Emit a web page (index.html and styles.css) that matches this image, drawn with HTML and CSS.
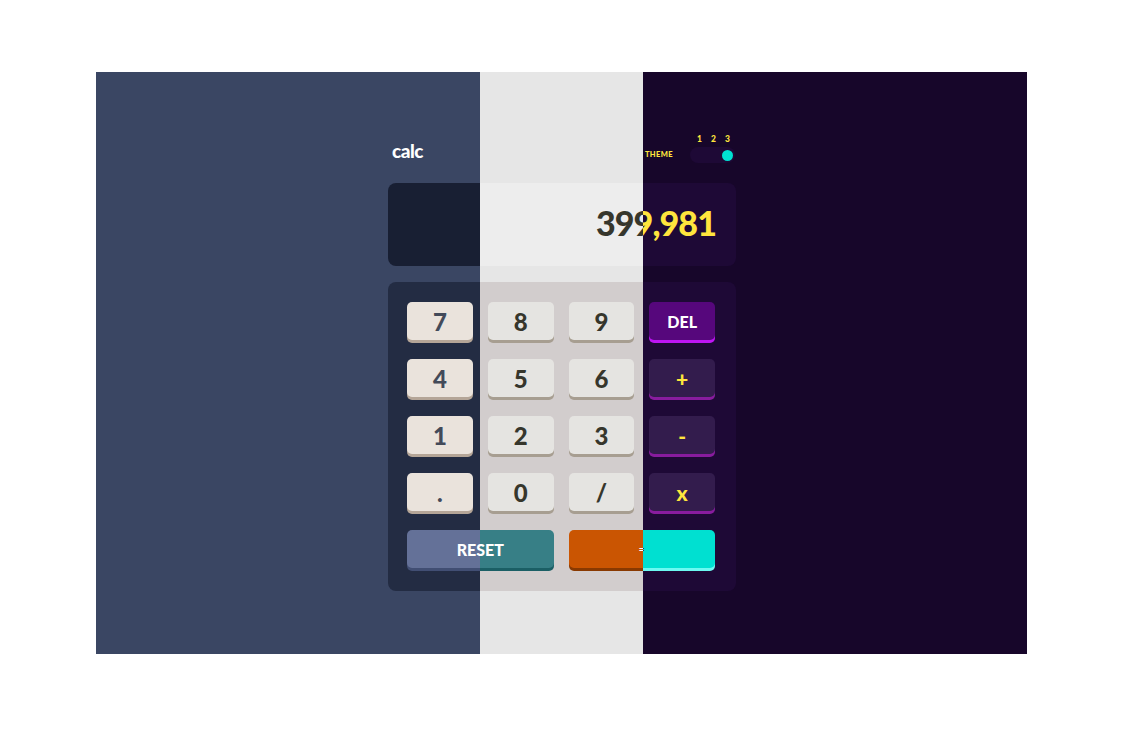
FILE: index.html
```html
<!DOCTYPE html>
<html lang="en">
<head>
<meta charset="utf-8">
<title>calc</title>
<link rel="stylesheet" href="styles.css">
</head>
<body>
<main class="stage">
  <section class="theme t1">
    <div class="calc">
      <header class="head">
        <h1 class="logo">calc</h1>
        <div class="switcher">
          <span class="label">THEME</span>
          <div class="toggle-wrap">
            <div class="nums"><span>1</span><span>2</span><span>3</span></div>
            <div class="toggle"><span class="knob"></span></div>
          </div>
        </div>
      </header>
      <div class="display">399,981</div>
      <div class="keypad">
        <button class="key">7</button><button class="key">8</button><button class="key">9</button><button class="key alt">DEL</button>
        <button class="key">4</button><button class="key">5</button><button class="key">6</button><button class="key op">+</button>
        <button class="key">1</button><button class="key">2</button><button class="key">3</button><button class="key op">-</button>
        <button class="key dot">.</button><button class="key">0</button><button class="key">/</button><button class="key op">x</button>
        <button class="key alt wide">RESET</button><button class="key eq wide">=</button>
      </div>
    </div>
  </section>
  <section class="theme t2">
    <div class="calc">
      <header class="head">
        <h1 class="logo">calc</h1>
        <div class="switcher">
          <span class="label">THEME</span>
          <div class="toggle-wrap">
            <div class="nums"><span>1</span><span>2</span><span>3</span></div>
            <div class="toggle"><span class="knob"></span></div>
          </div>
        </div>
      </header>
      <div class="display">399,981</div>
      <div class="keypad">
        <button class="key">7</button><button class="key">8</button><button class="key">9</button><button class="key alt">DEL</button>
        <button class="key">4</button><button class="key">5</button><button class="key">6</button><button class="key op">+</button>
        <button class="key">1</button><button class="key">2</button><button class="key">3</button><button class="key op">-</button>
        <button class="key dot">.</button><button class="key">0</button><button class="key">/</button><button class="key op">x</button>
        <button class="key alt wide">RESET</button><button class="key eq wide">=</button>
      </div>
    </div>
  </section>
  <section class="theme t3">
    <div class="calc">
      <header class="head">
        <h1 class="logo">calc</h1>
        <div class="switcher">
          <span class="label">THEME</span>
          <div class="toggle-wrap">
            <div class="nums"><span>1</span><span>2</span><span>3</span></div>
            <div class="toggle"><span class="knob"></span></div>
          </div>
        </div>
      </header>
      <div class="display">399,981</div>
      <div class="keypad">
        <button class="key">7</button><button class="key">8</button><button class="key">9</button><button class="key alt">DEL</button>
        <button class="key">4</button><button class="key">5</button><button class="key">6</button><button class="key op">+</button>
        <button class="key">1</button><button class="key">2</button><button class="key">3</button><button class="key op">-</button>
        <button class="key dot">.</button><button class="key">0</button><button class="key">/</button><button class="key op">x</button>
        <button class="key alt wide">RESET</button><button class="key eq wide">=</button>
      </div>
    </div>
  </section>
</main>
</body>
</html>
```
FILE: styles.css
```css
* { box-sizing: border-box; }
html, body { margin: 0; padding: 0; background: #ffffff; }
body {
  padding: 72px 0 0 96px;
  font-family: "Lato", "Liberation Sans", sans-serif;
  font-weight: 900;
}
.stage {
  width: 931px;
  height: 582px;
  display: grid;
}
.theme {
  grid-area: 1 / 1;
  display: flex;
  align-items: flex-start;
  padding: 62px 0 0 292px;
}
.t1 { clip-path: inset(0 547px 0 0); }
.t2 { clip-path: inset(0 384px 0 384px); }
.t3 { clip-path: inset(0 0 0 547px); }

.calc { width: 348px; display: flex; flex-direction: column; }

.head {
  height: 29px;
  display: flex;
  justify-content: space-between;
  align-items: flex-end;
  padding: 0 1px 0 4px;
}
.logo {
  margin: 0 0 2px;
  font-size: 19px;
  line-height: 20px;
  font-weight: 900;
  letter-spacing: -0.5px;
}
.switcher { display: flex; align-items: flex-end; gap: 17px; }
.label {
  font-size: 7.5px;
  font-weight: 900;
  letter-spacing: 0.4px;
  line-height: 10px;
  margin-bottom: 3px;
}
.toggle-wrap { display: flex; flex-direction: column; gap: 3px; width: 45px; }
.nums {
  display: flex;
  justify-content: space-between;
  padding: 0 5px 0 7px;
  font-size: 8.5px;
  line-height: 10px;
}
.toggle {
  height: 16px;
  border-radius: 8px;
  display: flex;
  align-items: center;
  padding: 0 2px;
}
.knob { width: 11px; height: 11px; border-radius: 50%; }

.display {
  margin-top: 20px;
  height: 83px;
  border-radius: 8px;
  display: flex;
  align-items: center;
  justify-content: flex-end;
  padding: 0 20px 4px;
  font-size: 34px;
  letter-spacing: -0.9px;
}

.keypad {
  margin-top: 16px;
  border-radius: 8px;
  padding: 20px 21px 23px 19px;
  display: grid;
  grid-template-columns: repeat(4, 1fr);
  column-gap: 15px;
  row-gap: 19px;
}
.key {
  height: 38px;
  border: 0;
  border-radius: 5px;
  font-family: inherit;
  font-weight: 900;
  font-size: 24px;
  display: flex;
  align-items: center;
  justify-content: center;
  padding: 0;
}
.key.alt { font-size: 16px; color: #ffffff; }
.key.wide { grid-column: span 2; }
.key.eq { font-size: 10px; }
.key.op { font-size: 21px; }

/* theme 1 */
.t1 { background: #3a4663; }
.t1 .logo, .t1 .label, .t1 .nums { color: #ffffff; }
.t1 .toggle { background: #232c43; }
.t1 .knob { background: #d03f2f; }
.t1 .display { background: #181f33; color: #ffffff; }
.t1 .keypad { background: #232c43; }
.t1 .key { background: #eae3dc; color: #434a59; box-shadow: 0 3px 0 #b4a597; }
.t1 .key.alt { background: #647198; color: #ffffff; box-shadow: 0 3px 0 #414e73; }
.t1 .key.eq { background: #d03f2f; color: #ffffff; box-shadow: 0 3px 0 #93261a; }

/* theme 2 */
.t2 { background: #e6e6e6; }
.t2 .logo, .t2 .label, .t2 .nums { color: #36362c; }
.t2 .toggle { background: #d2cdcd; justify-content: center; }
.t2 .knob { background: #ca5502; }
.t2 .display { background: #ededed; color: #36362c; }
.t2 .keypad { background: #d2cdcd; }
.t2 .key { background: #e5e4e1; color: #36362c; box-shadow: 0 3px 0 #a79e91; }
.t2 .key.alt { background: #377f86; color: #ffffff; box-shadow: 0 3px 0 #1b5f65; }
.t2 .key.eq { background: #ca5502; color: #ffffff; box-shadow: 0 3px 0 #893901; }

/* theme 3 */
.t3 { background: #17062a; }
.t3 .logo, .t3 .label, .t3 .nums { color: #ffe53d; }
.t3 .toggle { background: #1e0936; justify-content: flex-end; }
.t3 .knob { background: #00e0d1; }
.t3 .display { background: #1e0936; color: #ffe53d; }
.t3 .keypad { background: #1e0936; }
.t3 .key { background: #331c4d; color: #ffe53d; box-shadow: 0 3px 0 #881c9e; }
.t3 .key.alt { background: #56077c; color: #ffffff; box-shadow: 0 3px 0 #be15f4; }
.t3 .key.eq { background: #00e0d1; color: #1a2327; box-shadow: 0 3px 0 #6cf9f1; }
```
